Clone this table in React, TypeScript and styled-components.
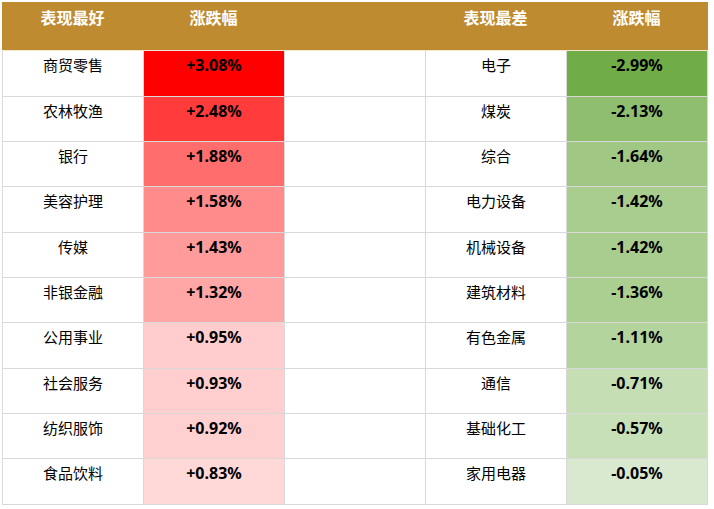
import styled, { createGlobalStyle } from "styled-components";

const GlobalStyle = createGlobalStyle`
  html, body {
    margin: 0;
    padding: 0;
    background: #ffffff;
  }
  body {
    font-family: "Noto Sans", "Noto Sans CJK SC", sans-serif;
  }
`;

type Row = {
    best: string;
    bestPct: string;
    bestBg: string;
    worst: string;
    worstPct: string;
    worstBg: string;
    h: number;
};

const rows: Row[] = [
    { best: "商贸零售", bestPct: "+3.08%", bestBg: "#ff0000", worst: "电子", worstPct: "-2.99%", worstBg: "#70ad47", h: 46 },
    { best: "农林牧渔", bestPct: "+2.48%", bestBg: "#ff3b3b", worst: "煤炭", worstPct: "-2.13%", worstBg: "#8fbe6e", h: 45 },
    { best: "银行", bestPct: "+1.88%", bestBg: "#ff6d6d", worst: "综合", worstPct: "-1.64%", worstBg: "#a0c884", h: 45 },
    { best: "美容护理", bestPct: "+1.58%", bestBg: "#ff8b8b", worst: "电力设备", worstPct: "-1.42%", worstBg: "#a8cd8e", h: 46 },
    { best: "传媒", bestPct: "+1.43%", bestBg: "#ff9b9b", worst: "机械设备", worstPct: "-1.42%", worstBg: "#a8cd8e", h: 45 },
    { best: "非银金融", bestPct: "+1.32%", bestBg: "#ffa6a6", worst: "建筑材料", worstPct: "-1.36%", worstBg: "#abcf91", h: 45 },
    { best: "公用事业", bestPct: "+0.95%", bestBg: "#ffcdcd", worst: "有色金属", worstPct: "-1.11%", worstBg: "#b4d49d", h: 46 },
    { best: "社会服务", bestPct: "+0.93%", bestBg: "#ffcfcf", worst: "通信", worstPct: "-0.71%", worstBg: "#c5deb4", h: 45 },
    { best: "纺织服饰", bestPct: "+0.92%", bestBg: "#ffd0d0", worst: "基础化工", worstPct: "-0.57%", worstBg: "#c8e0b8", h: 45 },
    { best: "食品饮料", bestPct: "+0.83%", bestBg: "#ffd8d8", worst: "家用电器", worstPct: "-0.05%", worstBg: "#d9e9cf", h: 46 },
];

const Page = styled.div`
    padding: 2px 0 0 2px;
`;

const Table = styled.div`
    width: 706px;
    display: flex;
    flex-direction: column;
`;

const HeaderRow = styled.div`
    display: grid;
    grid-template-columns: repeat(5, 141px);
    height: 48px;
    background: #bf8b30;
    border-bottom: 1px solid #f3e6d0;
`;

const HeaderCell = styled.div`
    color: #ffffff;
    font-family: "Noto Sans CJK SC", sans-serif;
    font-weight: 700;
    font-size: 16px;
    line-height: 22px;
    padding-top: 4px;
    text-align: center;
`;

const BodyRow = styled.div<{ $h: number }>`
    display: grid;
    grid-template-columns: repeat(5, 141px);
    height: ${(p) => p.$h}px;
    box-sizing: border-box;
    border-bottom: 1px solid #d9d9d9;
    border-right: 1px solid #d9d9d9;
    width: 706px;
`;

const Cell = styled.div<{ $bg?: string; $bold?: boolean }>`
    box-sizing: border-box;
    border-left: 1px solid #d9d9d9;
    background: ${(p) => p.$bg || "#ffffff"};
    color: #000000;
    font-family: ${(p) =>
        p.$bold ? `"Noto Sans", "Noto Sans CJK SC", sans-serif` : `"Noto Sans CJK SC", sans-serif`};
    font-weight: ${(p) => (p.$bold ? 700 : 400)};
    font-size: ${(p) => (p.$bold ? 16 : 15)}px;
    line-height: 20px;
    padding-top: 4px;
    text-align: center;
`;

export default function App() {
    return (
        <Page>
            <GlobalStyle />
            <Table>
                <HeaderRow>
                    <HeaderCell>表现最好</HeaderCell>
                    <HeaderCell>涨跌幅</HeaderCell>
                    <HeaderCell />
                    <HeaderCell>表现最差</HeaderCell>
                    <HeaderCell>涨跌幅</HeaderCell>
                </HeaderRow>
                {rows.map((r) => (
                    <BodyRow key={r.best} $h={r.h}>
                        <Cell>{r.best}</Cell>
                        <Cell $bg={r.bestBg} $bold>
                            {r.bestPct}
                        </Cell>
                        <Cell />
                        <Cell>{r.worst}</Cell>
                        <Cell $bg={r.worstBg} $bold>
                            {r.worstPct}
                        </Cell>
                    </BodyRow>
                ))}
            </Table>
        </Page>
    );
}
